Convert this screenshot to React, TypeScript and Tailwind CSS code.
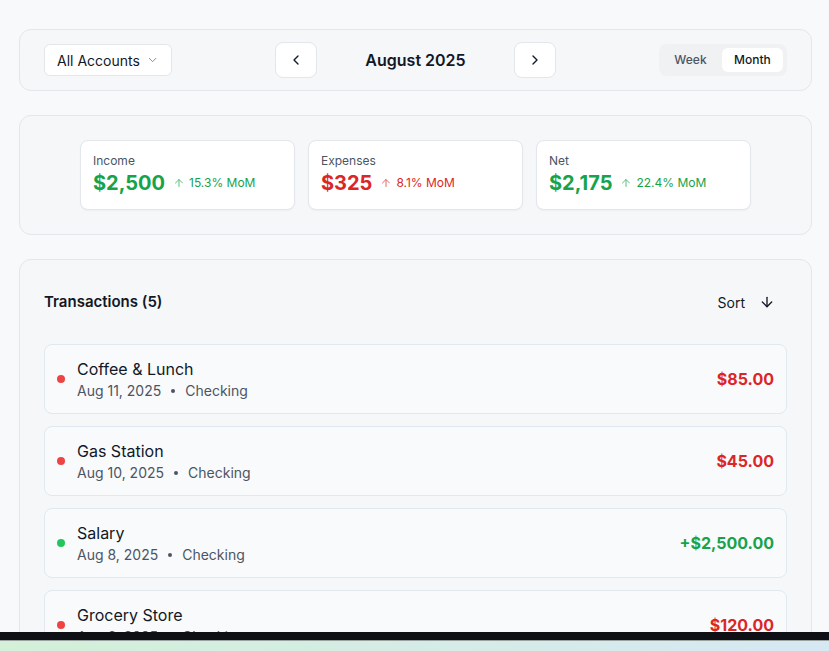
import React, { useState } from 'react';
import { ChevronDown, ChevronLeft, ChevronRight, ArrowUp, ArrowDown } from 'lucide-react';

type Txn = { id: number; name: string; date: string; account: string; amount: number };

const TXNS: Txn[] = [
  { id: 1, name: 'Coffee & Lunch', date: 'Aug 11, 2025', account: 'Checking', amount: -85 },
  { id: 2, name: 'Gas Station', date: 'Aug 10, 2025', account: 'Checking', amount: -45 },
  { id: 3, name: 'Salary', date: 'Aug 8, 2025', account: 'Checking', amount: 2500 },
  { id: 4, name: 'Grocery Store', date: 'Aug 6, 2025', account: 'Checking', amount: -120 },
  { id: 5, name: 'Internet Bill', date: 'Aug 3, 2025', account: 'Checking', amount: -75 },
];

const STATS = [
  { label: 'Income', value: '$2,500', change: '15.3% MoM', tone: 'green' },
  { label: 'Expenses', value: '$325', change: '8.1% MoM', tone: 'red' },
  { label: 'Net', value: '$2,175', change: '22.4% MoM', tone: 'green' },
];

const fmt = (n: number) =>
  (n > 0 ? '+' : '') + '$' + Math.abs(n).toLocaleString('en-US', { minimumFractionDigits: 2, maximumFractionDigits: 2 });

const App: React.FC = () => {
  const [range, setRange] = useState<'week' | 'month'>('month');

  return (
    <main className="min-h-screen bg-[#f8f9fa] pl-[19px] pr-[17px] pt-[29px] pb-10 font-['Inter',sans-serif] text-[#111827]">
      <div className="flex flex-col gap-6">
        {/* top bar */}
        <section className="flex items-center justify-between rounded-xl border border-[#e3e6ea] bg-[#f6f7f8] px-6 py-3">
          <button className="flex h-[32px] w-[128px] items-center gap-1.5 whitespace-nowrap rounded-md border border-[#e3e6ea] bg-white px-3 text-[14px] text-[#111827]">
            All Accounts
            <ChevronDown className="h-4 w-4 text-[#6b7280]" strokeWidth={1.5} />
          </button>

          <div className="flex items-center gap-12">
            <button className="flex h-9 w-[42px] items-center justify-center rounded-lg border border-[#e3e6ea] bg-white">
              <ChevronLeft className="h-4 w-4" strokeWidth={2} />
            </button>
            <h2 className="text-[16px] font-semibold">August 2025</h2>
            <button className="flex h-9 w-[42px] items-center justify-center rounded-lg border border-[#e3e6ea] bg-white">
              <ChevronRight className="h-4 w-4" strokeWidth={2} />
            </button>
          </div>

          <div className="flex w-[128px] items-center gap-1 rounded-lg bg-[#f0f1f3] p-1">
            <button
              onClick={() => setRange('week')}
              className={`h-6 flex-1 rounded-md text-[12px] font-medium ${range === 'week' ? 'bg-white text-[#111827]' : 'text-[#4b5563]'}`}
            >
              Week
            </button>
            <button
              onClick={() => setRange('month')}
              className={`h-6 w-[61px] rounded-md text-[12px] font-medium ${range === 'month' ? 'bg-white text-[#111827]' : 'text-[#4b5563]'}`}
            >
              Month
            </button>
          </div>
        </section>

        {/* stats */}
        <section className="rounded-xl border border-[#e3e6ea] bg-[#f6f7f8] p-6">
          <div className="mx-auto grid max-w-[671px] grid-cols-3 gap-[13px]">
            {STATS.map(s => (
              <div key={s.label} className="rounded-lg border border-[#e3e6ea] bg-white px-3 py-3 shadow-[0_1px_2px_rgba(0,0,0,0.04)]">
                <div className="text-[12px] leading-4 text-[#4b5563]">{s.label}</div>
                <div className="flex items-center gap-2">
                  <span className={`text-[20px] font-bold leading-7 ${s.tone === 'green' ? 'text-[#16a34a]' : 'text-[#dc2626]'}`}>
                    {s.value}
                  </span>
                  <span className={`flex items-center gap-1 text-[12px] ${s.tone === 'green' ? 'text-[#16a34a]' : 'text-[#dc2626]'}`}>
                    <ArrowUp className="h-3 w-3 opacity-70" strokeWidth={2} />
                    {s.change}
                  </span>
                </div>
              </div>
            ))}
          </div>
        </section>

        {/* transactions */}
        <section className="rounded-xl border border-[#e3e6ea] bg-[#f6f7f8] p-6">
          <div className="mb-6 flex h-9 items-center justify-between">
            <h3 className="text-[15px] font-semibold">Transactions ({TXNS.length})</h3>
            <button className="flex items-center gap-3.5 px-3 text-[14px]">
              Sort
              <ArrowDown className="h-4 w-4" strokeWidth={2} />
            </button>
          </div>
          <div className="flex flex-col gap-3">
            {TXNS.map(t => (
              <div key={t.id} className="flex items-center gap-3 rounded-lg border border-[#e2e8f0] bg-[#f9fafb] px-3 py-3">
                <span className={`h-2 w-2 shrink-0 rounded-full ${t.amount > 0 ? 'bg-[#22c55e]' : 'bg-[#ef4444]'}`} />
                <div className="flex-1">
                  <div className="text-[16px] leading-6 text-[#111827]">{t.name}</div>
                  <div className="flex items-center gap-2.5 text-[14px] leading-5 text-[#4b5563]">
                    <span>{t.date}</span>
                    <span className="h-1 w-1 rounded-full bg-[#4b5563]" />
                    <span>{t.account}</span>
                  </div>
                </div>
                <div className={`text-[16px] font-bold ${t.amount > 0 ? 'text-[#16a34a]' : 'text-[#dc2626]'}`}>{fmt(t.amount)}</div>
              </div>
            ))}
          </div>
        </section>
      </div>

      {/* bottom overlay strip */}
      <div className="fixed inset-x-0 bottom-0">
        <div className="h-2 bg-[#0e1016]" />
        <div className="h-px bg-[#9aa3a0]" />
        <div className="h-[10px] bg-gradient-to-r from-[#d3f0d8] to-[#d6e8f3]" />
      </div>
    </main>
  );
};

export default App;
